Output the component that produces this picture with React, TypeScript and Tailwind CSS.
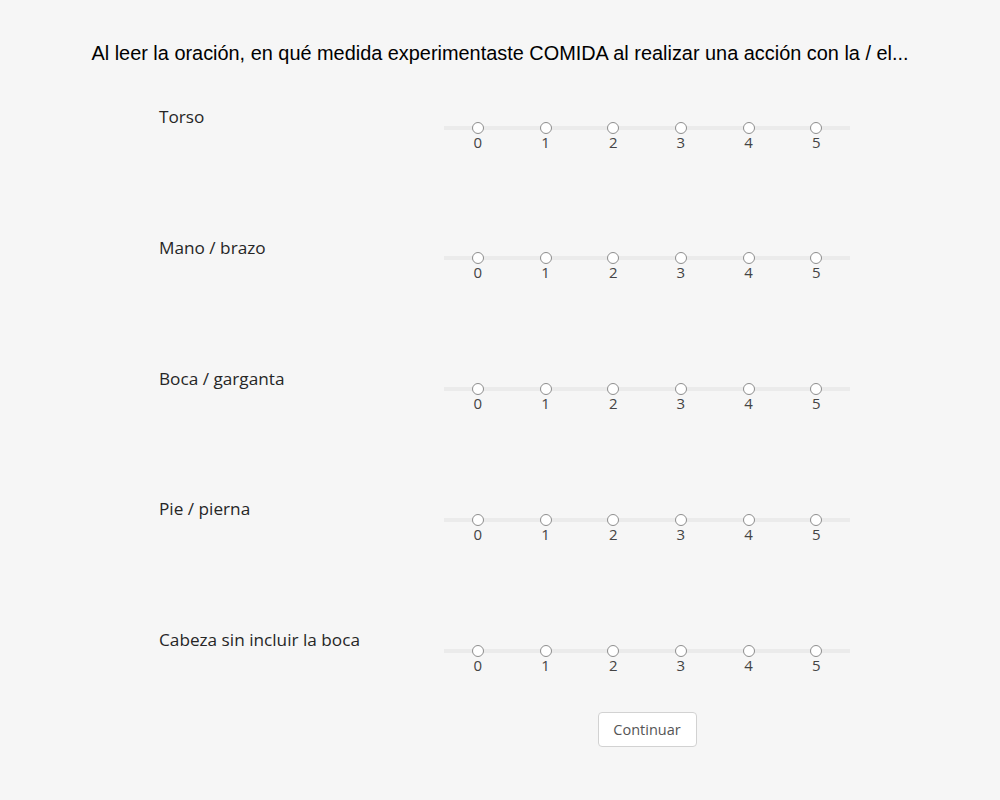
const ITEMS = [
  "Torso",
  "Mano / brazo",
  "Boca / garganta",
  "Pie / pierna",
  "Cabeza sin incluir la boca",
];

const SCALE = [0, 1, 2, 3, 4, 5];

const RatingRow = ({ label }: { label: string }) => (
  <div className="flex h-[85px]">
    <div className="w-[285px] pl-[159px] pt-[1px] box-content text-[17.2px] leading-6 text-[#262626]">
      <span className="whitespace-nowrap">{label}</span>
    </div>
    <div className="relative w-[406px] pt-[17.5px]">
      {/* track */}
      <div className="absolute left-0 right-0 top-[21.5px] h-1 bg-[#ebebeb]" />
      <div className="relative flex">
        {SCALE.map((n) => (
          <label key={n} className="flex flex-1 flex-col items-center cursor-pointer">
            <span className="h-3 w-3 rounded-full border-[1.5px] border-[#8e8e8e] bg-white" />
            <span className="text-[15px] leading-4 text-[#444]">{n}</span>
          </label>
        ))}
      </div>
    </div>
  </div>
);

export default function App() {
  return (
    <div
      className="min-h-[800px] w-full bg-[#f6f6f6]"
      style={{ fontFamily: '"Open Sans", sans-serif' }}
    >
      <h1
        className="pt-[41px] text-center text-[19.9px] leading-6 text-black"
        style={{ fontFamily: '"Liberation Sans", Arial, sans-serif' }}
      >
        Al leer la oración, en qué medida experimentaste COMIDA al realizar una acción con la / el...
      </h1>

      <div className="mt-[39px] flex flex-col gap-[45.75px]">
        {ITEMS.map((item) => (
          <RatingRow key={item} label={item} />
        ))}
      </div>

      <div className="flex pl-[444px]">
        <div className="flex w-[406px] justify-center">
          <button className="h-[35px] w-[99px] rounded-[4px] border border-[#d2d2d2] bg-white text-[14.5px] text-[#555]">
            Continuar
          </button>
        </div>
      </div>
    </div>
  );
}
